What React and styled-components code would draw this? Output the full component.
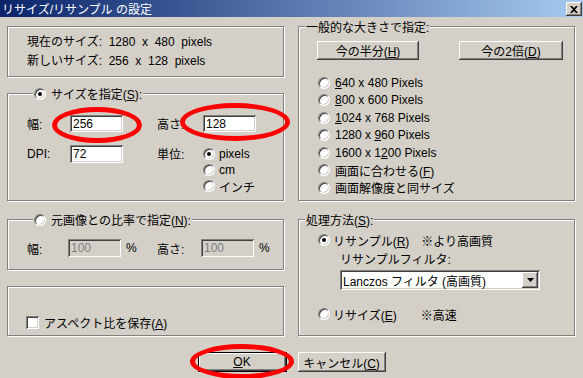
import React from "react";
import styled, { createGlobalStyle } from "styled-components";

const GlobalStyle = createGlobalStyle`
  body {
    margin: 0;
    background: #d4d0c8;
    font-family: "Liberation Sans", "Noto Sans CJK JP", sans-serif;
    font-size: 12px;
    color: #000;
  }
`;

const Window = styled.div`
  width: 583px;
  height: 378px;
  background: #d4d0c8;
  display: flex;
  flex-direction: column;
  overflow: hidden;
`;

const TitleBar = styled.div`
  height: 17px;
  flex: none;
  display: flex;
  align-items: center;
  justify-content: space-between;
  padding: 0 1px 0 2px;
  background: linear-gradient(to right, #0a246a, #a6caf0);
  color: #fff;
  font-size: 12px;
`;

const CloseButton = styled.div`
  width: 16px;
  height: 14px;
  margin-top: 1px;
  display: flex;
  align-items: center;
  justify-content: center;
  background: #d4d0c8;
  box-shadow: inset -1px -1px #404040, inset 1px 1px #fff,
    inset -2px -2px #808080, inset 2px 2px #d4d0c8;
`;

const Body = styled.div`
  display: grid;
  grid-template-columns: 277px 277px;
  grid-template-rows: 175px 117px;
  column-gap: 14px;
  row-gap: 18px;
  padding: 9px 8px 0 7px;
`;

const Column = styled.div`
  display: flex;
  flex-direction: column;
  gap: 16px;
`;

const Frame = styled.div`
  position: relative;
  box-sizing: border-box;
  height: ${(p) => p.$h}px;
  border: 1px solid #808080;
  box-shadow: 1px 1px 0 #fff, inset 1px 1px 0 #fff;
`;

const Caption = styled.div`
  position: absolute;
  top: -8px;
  left: ${(p) => p.$left}px;
  display: flex;
  align-items: center;
  gap: 5px;
  height: 15px;
  padding: 0 1px;
  background: #d4d0c8;
  white-space: nowrap;
`;

const InfoBox = styled.div`
  padding: 6px 0 0 19px;
`;

const InfoLine = styled.div`
  height: 19px;
  line-height: 19px;
  white-space: pre;
`;

const SizeGrid = styled.div`
  display: grid;
  grid-template-columns: 43px 53px 34px 46px 1fr;
  grid-template-rows: 17px auto;
  row-gap: 13px;
  padding: 21px 0 0 19px;
`;

const RatioGrid = styled.div`
  display: grid;
  grid-template-columns: 41px 53px 36px 44px 53px auto;
  grid-template-rows: 18px;
  padding: 19px 0 0 19px;
`;

const Label = styled.div`
  display: flex;
  align-items: center;
  white-space: nowrap;
  padding-left: ${(p) => p.$pad || 0}px;
  align-self: ${(p) => p.$self || "stretch"};
  height: ${(p) => (p.$h ? p.$h + "px" : "auto")};
`;

const Field = styled.div`
  box-sizing: border-box;
  height: ${(p) => p.$h || 17}px;
  width: ${(p) => p.$w || 53}px;
  display: flex;
  align-items: center;
  padding: 0 3px;
  background: ${(p) => (p.$disabled ? "#d4d0c8" : "#fff")};
  color: ${(p) => (p.$disabled ? "#808080" : "#000")};
  box-shadow: inset 1px 1px #808080, inset -1px -1px #fff,
    inset 2px 2px #404040, inset -2px -2px #d4d0c8;
`;

const RadioList = styled.div`
  display: flex;
  flex-direction: column;
  padding-top: ${(p) => p.$top || 0}px;
  margin-left: ${(p) => p.$left || 0}px;
`;

const Option = styled.div`
  display: flex;
  align-items: center;
  gap: ${(p) => p.$gap || 5}px;
  height: ${(p) => p.$h || 16}px;
  white-space: nowrap;
`;

const RadioDot = styled.span`
  position: relative;
  flex: none;
  box-sizing: border-box;
  width: 12px;
  height: 12px;
  border-radius: 50%;
  background: #fff;
  border: 1px solid;
  border-color: #808080 #fff #fff #808080;
  box-shadow: inset 1px 1px #404040, inset -1px -1px #d4d0c8;

  &::after {
    content: "";
    display: ${(p) => (p.$checked ? "block" : "none")};
    position: absolute;
    left: 3px;
    top: 3px;
    width: 4px;
    height: 4px;
    border-radius: 50%;
    background: #000;
  }
`;

const CheckBox = styled.span`
  flex: none;
  width: 13px;
  height: 13px;
  background: #fff;
  box-shadow: inset 1px 1px #808080, inset -1px -1px #fff,
    inset 2px 2px #404040, inset -2px -2px #d4d0c8;
`;

const CheckRow = styled.div`
  display: flex;
  align-items: center;
  gap: 5px;
  height: 13px;
  margin: 29px 0 0 18px;
`;

const U = styled.span`
  text-decoration: underline;
  text-underline-offset: 1px;
`;

const PresetBox = styled.div`
  display: flex;
  flex-direction: column;
  padding: 14px 0 0 18px;
`;

const ButtonRow = styled.div`
  display: flex;
  gap: ${(p) => p.$gap}px;
  justify-content: ${(p) => p.$justify || "flex-start"};
  margin-top: ${(p) => p.$top || 0}px;
`;

const Button = styled.div`
  position: relative;
  box-sizing: border-box;
  width: ${(p) => p.$w}px;
  height: ${(p) => p.$h}px;
  display: flex;
  align-items: center;
  justify-content: center;
  background: #d4d0c8;
  white-space: nowrap;
  border: ${(p) => (p.$default ? "1px solid #000" : "none")};
  box-shadow: inset -1px -1px #404040, inset 1px 1px #fff,
    inset -2px -2px #808080, inset 2px 2px #d4d0c8;
`;

const MethodBox = styled.div`
  display: flex;
  flex-direction: column;
  padding: 12px 0 0 19px;
`;

const Note = styled.span`
  margin-left: ${(p) => p.$left}px;
`;

const Indented = styled.div`
  margin-left: 22px;
  margin-top: ${(p) => p.$top}px;
  height: ${(p) => p.$h || "auto"};
  display: flex;
  align-items: center;
`;

const Select = styled.div`
  box-sizing: border-box;
  width: 200px;
  height: 20px;
  display: flex;
  align-items: center;
  justify-content: space-between;
  padding: 2px;
  background: #fff;
  box-shadow: inset 1px 1px #808080, inset -1px -1px #fff,
    inset 2px 2px #404040, inset -2px -2px #d4d0c8;
`;

const SelectText = styled.span`
  padding-left: 1px;
  white-space: nowrap;
`;

const DropButton = styled.span`
  width: 16px;
  height: 16px;
  display: flex;
  align-items: center;
  justify-content: center;
  background: #d4d0c8;
  box-shadow: inset -1px -1px #404040, inset 1px 1px #fff,
    inset -2px -2px #808080, inset 2px 2px #d4d0c8;
`;

const Mark = styled.span`
  position: absolute;
  left: ${(p) => p.$x}px;
  top: ${(p) => p.$y}px;
  width: ${(p) => p.$w}px;
  height: ${(p) => p.$h}px;
  box-sizing: border-box;
  border: 5px solid #ff0000;
  border-radius: 50%;
  pointer-events: none;
`;

const Radio = ({ checked, children, h, gap }) => (
  <Option $h={h} $gap={gap}>
    <RadioDot $checked={checked} />
    {children}
  </Option>
);

const presets = [
  [<U key="u">6</U>, "40 x 480 Pixels"],
  [<U key="u">8</U>, "00 x 600 Pixels"],
  [<U key="u">1</U>, "024 x 768 Pixels"],
  ["1280 x ", <U key="u">9</U>, "60 Pixels"],
  ["1600 x 1", <U key="u">2</U>, "00 Pixels"],
  ["画面に合わせる(", <U key="u">F</U>, ")"],
  ["画面解像度と同サイズ"],
];

export default function App() {
  return (
    <Window>
      <GlobalStyle />
      <TitleBar>
        <span>リサイズ/リサンプル の設定</span>
        <CloseButton>
          <svg width="8" height="7" viewBox="0 0 8 7">
            <path d="M0 0h2l2 2 2-2h2L5 3.5 8 7H6L4 5 2 7H0l3-3.5z" fill="#000" />
          </svg>
        </CloseButton>
      </TitleBar>

      <Body>
        <Column>
          <Frame $h={51}>
            <InfoBox>
              <InfoLine>現在のサイズ:  1280  x  480  pixels</InfoLine>
              <InfoLine>新しいサイズ:  256  x  128  pixels</InfoLine>
            </InfoBox>
          </Frame>

          <Frame $h={108}>
            <Caption $left={25}>
              <RadioDot $checked />
              <span>
                サイズを指定(<U>S</U>):
              </span>
            </Caption>
            <SizeGrid>
              <Label>幅:</Label>
              <Field>256</Field>
              <span />
              <Label>高さ:</Label>
              <Field>128</Field>

              <Label $self="start" $h={17}>DPI:</Label>
              <Field $self="start" $h={18}>72</Field>
              <span />
              <Label $self="start" $h={17}>単位:</Label>
              <RadioList $top={1}>
                <Radio checked gap={4}>pixels</Radio>
                <Radio gap={4}>cm</Radio>
                <Radio gap={4}>インチ</Radio>
              </RadioList>
            </SizeGrid>
            <Mark $x={44} $y={13} $w={90} $h={36} />
            <Mark $x={172} $y={9} $w={110} $h={38} />
          </Frame>
        </Column>

        <Frame $h={175}>
          <Caption $left={6}>一般的な大きさで指定:</Caption>
          <PresetBox>
            <ButtonRow $gap={40}>
              <Button $w={102} $h={19}>
                <span>
                  今の半分(<U>H</U>)
                </span>
              </Button>
              <Button $w={104} $h={19}>
                <span>
                  今の2倍(<U>D</U>)
                </span>
              </Button>
            </ButtonRow>
            <RadioList $top={14} $left={1}>
              {presets.map((p, i) => (
                <Radio key={i} h={17.5}>
                  <span>{p}</span>
                </Radio>
              ))}
            </RadioList>
          </PresetBox>
        </Frame>

        <Column>
          <Frame $h={51}>
            <Caption $left={25}>
              <RadioDot />
              <span>
                元画像との比率で指定(<U>N</U>):
              </span>
            </Caption>
            <RatioGrid>
              <Label>幅:</Label>
              <Field $disabled $h={18}>100</Field>
              <Label $pad={5}>%</Label>
              <Label>高さ:</Label>
              <Field $disabled $h={18}>100</Field>
              <Label $pad={5}>%</Label>
            </RatioGrid>
          </Frame>

          <Frame $h={50}>
            <CheckRow>
              <CheckBox />
              <span>
                アスペクト比を保存(<U>A</U>)
              </span>
            </CheckRow>
          </Frame>
        </Column>

        <Frame $h={117}>
          <Caption $left={6}>
            <span>
              処理方法(<U>S</U>):
            </span>
          </Caption>
          <MethodBox>
            <Radio checked gap={3}>
              <span>
                リサンプル(<U>R</U>)
              </span>
              <Note $left={9}>※より高画質</Note>
            </Radio>
            <Indented $top={2} $h="16px">
              リサンプルフィルタ:
            </Indented>
            <Indented $top={4}>
              <Select>
                <SelectText>Lanczos フィルタ (高画質)</SelectText>
                <DropButton>
                  <svg width="7" height="4" viewBox="0 0 7 4">
                    <path d="M0 0h7L3.5 4z" fill="#000" />
                  </svg>
                </DropButton>
              </Select>
            </Indented>
            <RadioList $top={16}>
              <Radio gap={3}>
                <span>
                  リサイズ(<U>E</U>)
                </span>
                <Note $left={21}>※高速</Note>
              </Radio>
            </RadioList>
          </MethodBox>
        </Frame>
      </Body>

      <ButtonRow $gap={11} $justify="center" $top={16}>
        <Button $w={89} $h={20} $default>
          <span>
            <U>O</U>K
          </span>
          <Mark $x={-9} $y={-9} $w={104} $h={35} />
        </Button>
        <Button $w={88} $h={20}>
          <span>
            キャンセル(<U>C</U>)
          </span>
        </Button>
      </ButtonRow>
    </Window>
  );
}
